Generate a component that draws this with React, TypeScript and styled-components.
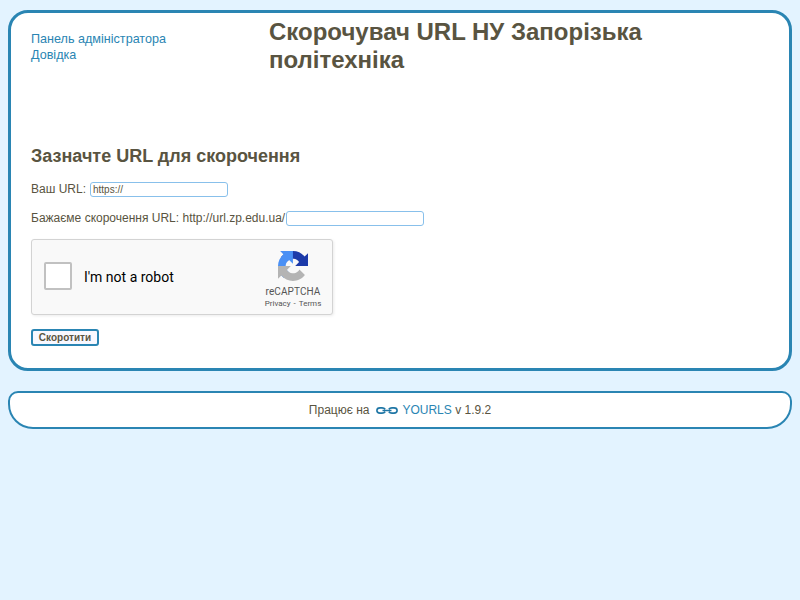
import React from "react";
import styled, { createGlobalStyle } from "styled-components";

const GlobalStyle = createGlobalStyle`
  body {
    margin: 0;
    background: #e3f3ff;
    color: #595441;
    font: 12px/14px "Liberation Sans", Arial, sans-serif;
  }
`;

const Page = styled.div`
  padding: 10px 8px 0;
`;

const Panel = styled.main`
  box-sizing: border-box;
  height: 361px;
  padding: 0 20px;
  background: #fff;
  border: 3px solid #2a85b3;
  border-radius: 20px;
`;

const Header = styled.header`
  display: flex;
  height: 133px;
`;

const Link = styled.a`
  color: #2a85b3;
  text-decoration: none;
`;

const Nav = styled.nav`
  display: flex;
  flex-direction: column;
  width: 238px;
  padding-top: 18px;
  font-size: 12.6px;
  line-height: 16px;
`;

const Title = styled.h1`
  width: 400px;
  margin: 5px 0 0;
  font-size: 24px;
  line-height: 28px;
`;

const Heading = styled.h2`
  margin: 0;
  font-size: 18px;
  line-height: 20px;
`;

const Field = styled.label<{ $top: number; $gap: number }>`
  display: flex;
  align-items: flex-start;
  gap: ${(p) => p.$gap}px;
  height: 15px;
  margin-top: ${(p) => p.$top}px;
`;

const Input = styled.input`
  box-sizing: border-box;
  width: 138px;
  height: 15px;
  margin: 0;
  padding: 0 2px;
  border: 1px solid #88c0eb;
  border-radius: 3px;
  background: #fff;
  color: #595441;
  font: 10px "Liberation Sans", Arial, sans-serif;
  outline: none;
`;

const Captcha = styled.section`
  box-sizing: border-box;
  display: flex;
  align-items: center;
  width: 302px;
  height: 76px;
  margin-top: 13px;
  padding-left: 12px;
  background: #f9f9f9;
  border: 1px solid #d3d3d3;
  border-radius: 3px;
  box-shadow: 1px 1px 3px rgba(0, 0, 0, 0.08);
  font-family: Roboto, sans-serif;
`;

const Checkbox = styled.button`
  box-sizing: border-box;
  width: 28px;
  height: 28px;
  margin: 0 12px 2px 0;
  padding: 0;
  background: #fff;
  border: 2px solid #c1c1c1;
  border-radius: 2px;
`;

const CaptchaLabel = styled.span`
  width: 174px;
  color: #000;
  font-size: 14px;
  line-height: 17px;
`;

const Brand = styled.div`
  display: flex;
  flex-direction: column;
  align-items: center;
  width: 70px;
  height: 74px;
  color: #555;
`;

const BrandLogo = styled.svg`
  width: 30px;
  height: 30px;
  margin-top: 11px;
`;

const BrandName = styled.div`
  margin-top: 5px;
  font-size: 10px;
  line-height: 12px;
  letter-spacing: 0.1px;
`;

const BrandLinks = styled.div`
  display: flex;
  gap: 3px;
  margin-top: 1px;
  font-size: 8px;
  line-height: 10px;
`;

const Submit = styled.button`
  box-sizing: border-box;
  display: block;
  width: 68px;
  height: 17px;
  margin-top: 13px;
  padding: 0;
  background: #f8f8ff;
  border: 2px solid #2a85b3;
  border-radius: 3px;
  color: #595441;
  font: bold 10px/13px "Liberation Sans", Arial, sans-serif;
`;

const CaptchaRow = styled.div`
  padding-bottom: 1px;
`;

const Footer = styled.footer`
  box-sizing: border-box;
  display: flex;
  align-items: center;
  justify-content: center;
  height: 38px;
  margin-top: 20px;
  background: #fff;
  border: 2px solid #2a85b3;
  border-radius: 10px 10px 25px 25px;
  white-space: pre;
`;

const ChainIcon = styled.svg`
  width: 22px;
  height: 7px;
  margin: 0 4.5px 0 6.5px;
`;

export default function App() {
  return (
    <Page>
      <GlobalStyle />
      <Panel>
        <Header>
          <Nav>
            <Link>Панель адміністратора</Link>
            <Link>Довідка</Link>
          </Nav>
          <Title>Скорочувач URL НУ Запорізька політехніка</Title>
        </Header>
        <Heading>Зазначте URL для скорочення</Heading>
        <Field $top={16} $gap={4}>
          Ваш URL:
          <Input defaultValue="https://" />
        </Field>
        <Field $top={14} $gap={1}>
          Бажаєме скорочення URL: http://url.zp.edu.ua/
          <Input />
        </Field>
        <CaptchaRow>
          <Captcha>
            <Checkbox aria-label="I'm not a robot" />
            <CaptchaLabel>I'm not a robot</CaptchaLabel>
            <Brand>
              <BrandLogo viewBox="0 0 64 64">
                <path fill="#1c3aa9" d="M64 31.955l-.033-1.37V4.687l-7.16 7.16C50.948 4.674 42.033.093 32.05.093c-10.4 0-19.622 4.96-25.458 12.64l11.736 11.86a15.55 15.55 0 0 1 4.754-5.334c2.05-1.6 4.952-2.906 8.968-2.906.485 0 .86.057 1.135.163 4.976.393 9.288 3.14 11.828 7.124l-8.307 8.307L64 31.953" />
                <path fill="#4a90f5" d="M31.862.094l-1.37.033H4.594l7.16 7.16C4.58 13.147 0 22.06 0 32.046c0 10.4 4.96 19.622 12.64 25.458L24.5 45.768a15.55 15.55 0 0 1-5.334-4.754c-1.6-2.05-2.906-4.952-2.906-8.968 0-.485.057-.86.163-1.135.393-4.976 3.14-9.288 7.124-11.828l8.307 8.307L31.86.095" />
                <path fill="#b4b4b4" d="M.001 32.045l.033 1.37v25.898l7.16-7.16c5.86 7.173 14.774 11.754 24.76 11.754 10.4 0 19.622-4.96 25.458-12.64l-11.736-11.86a15.55 15.55 0 0 1-4.754 5.334c-2.05 1.6-4.952 2.906-8.968 2.906-.485 0-.86-.057-1.135-.163-4.976-.393-9.288-3.14-11.828-7.124l8.307-8.307c-10.522.04-22.4.066-27.295-.005" />
              </BrandLogo>
              <BrandName>reCAPTCHA</BrandName>
              <BrandLinks>
                <span>Privacy</span>
                <span>-</span>
                <span>Terms</span>
              </BrandLinks>
            </Brand>
          </Captcha>
        </CaptchaRow>
        <Submit>Скоротити</Submit>
      </Panel>
      <Footer>
        <span>Працює на</span>
        <ChainIcon viewBox="0 0 22 7" fill="none" stroke="#1f76a5" strokeWidth="1.6">
          <path d="M9.2 2.2C8.5 1.2 7.5 .9 6 .9H4C2 .9 .9 2 .9 3.5S2 6.1 4 6.1h2c1.5 0 2.5-.3 3.2-1.3M12.8 2.2c.7-1 1.7-1.3 3.2-1.3h2c2 0 3.1 1.1 3.1 2.6S20 6.1 18 6.1h-2c-1.5 0-2.5-.3-3.2-1.3M6.5 3.5h9" />
        </ChainIcon>
        <Link>YOURLS</Link>
        <span> v 1.9.2</span>
      </Footer>
    </Page>
  );
}
